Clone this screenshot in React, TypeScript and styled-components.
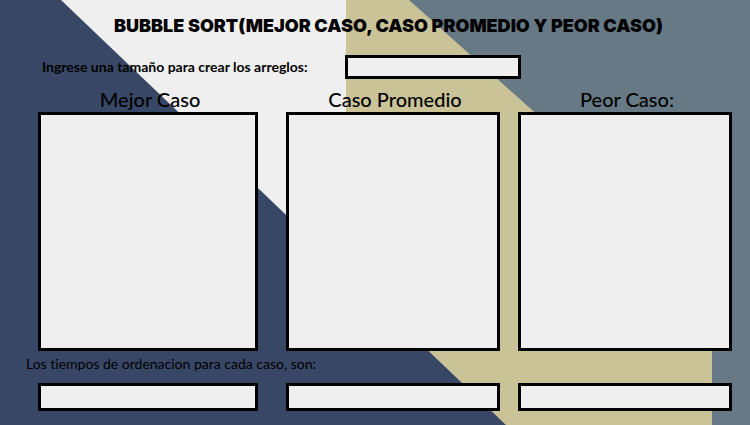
import React from "react";
import styled, { createGlobalStyle, css } from "styled-components";

const GlobalStyle = createGlobalStyle`
  *, *::before, *::after { box-sizing: border-box; }
  body { margin: 0; background: #efefef; }
`;

const Page = styled.main`
  position: relative;
  isolation: isolate;
  display: flex;
  flex-direction: column;
  min-height: 100vh;
  padding: 14px 0;
  color: #000;
  font-family: Lato, "Open Sans", sans-serif;
  font-variant-ligatures: none;
`;

const Backdrop = styled.svg`
  position: absolute;
  inset: 0;
  z-index: -1;
  width: 100%;
  height: 100%;
`;

const Title = styled.h1`
  margin: 0 0 17px;
  padding-left: 27px;
  font-family: Inter, sans-serif;
  font-size: 18px;
  font-weight: 900;
  line-height: 24px;
  text-align: center;
  text-transform: uppercase;
`;

const SizeRow = styled.div`
  display: grid;
  grid-template-columns: 303fr 176fr 229fr;
  align-items: center;
  margin-bottom: 9px;
  padding-left: 42px;
`;

const SizeLabel = styled.label`
  font-size: 14px;
  font-weight: 700;
  line-height: 22px;
  white-space: nowrap;
`;

const boxStyle = css`
  display: block;
  width: 100%;
  margin: 0;
  padding: 4px 8px;
  border: 3px solid #000;
  border-radius: 0;
  background: #efefef;
  color: #000;
  font: inherit;
  font-size: 14px;
`;

const TextBox = styled.input<{ $height: number }>`
  ${boxStyle}
  height: ${({ $height }) => $height}px;
`;

const ListBox = styled.textarea`
  ${boxStyle}
  flex: 1;
  min-height: 160px;
  resize: none;
`;

const Columns = styled.div<{ $grow?: boolean }>`
  display: grid;
  grid-template-columns: 248fr 232fr 214fr;
  flex: ${({ $grow }) => ($grow ? 1 : "none")};
  padding: 0 18px 0 38px;
`;

const Column = styled.div<{ $gutter: number }>`
  display: flex;
  flex-direction: column;
  min-width: 0;
  padding-right: ${({ $gutter }) => $gutter}px;
`;

const CaseLabel = styled.label`
  padding-left: 4px;
  padding-bottom: 2px;
  font-size: 20px;
  font-weight: 500;
  line-height: 22px;
  text-align: center;
`;

const Note = styled.p`
  margin: 0;
  padding: 0 26px 6px;
  font-size: 14px;
  line-height: 26px;
`;

const cases = [
  { id: "mejor", label: "Mejor Caso", gutter: 28 },
  { id: "promedio", label: "Caso Promedio", gutter: 18 },
  { id: "peor", label: "Peor Caso:", gutter: 0 },
];

export default function App() {
  return (
    <>
      <GlobalStyle />
      <Page>
        <Backdrop viewBox="0 0 750 425" preserveAspectRatio="none" aria-hidden="true">
          <rect width="750" height="425" fill="#efefef" />
          <path d="M346 0H750V425H346Z" fill="#cac398" />
          <path d="M409 0H750V425H712V271Z" fill="#667985" />
          <path d="M0 0H61L506 425H0Z" fill="#394766" />
        </Backdrop>
        <Title>Bubble Sort(Mejor Caso, Caso Promedio y Peor Caso)</Title>
        <SizeRow>
          <SizeLabel htmlFor="size">Ingrese una tamaño para crear los arreglos:</SizeLabel>
          <TextBox id="size" type="text" $height={24} />
        </SizeRow>
        <Columns $grow>
          {cases.map((item) => (
            <Column key={item.id} $gutter={item.gutter}>
              <CaseLabel id={`${item.id}-label`} htmlFor={item.id}>
                {item.label}
              </CaseLabel>
              <ListBox id={item.id} />
            </Column>
          ))}
        </Columns>
        <Note id="times">Los tiempos de ordenacion para cada caso, son:</Note>
        <Columns role="group" aria-labelledby="times">
          {cases.map((item) => (
            <Column key={item.id} $gutter={item.gutter}>
              <TextBox
                type="text"
                readOnly
                aria-labelledby={`times ${item.id}-label`}
                $height={28}
              />
            </Column>
          ))}
        </Columns>
      </Page>
    </>
  );
}
